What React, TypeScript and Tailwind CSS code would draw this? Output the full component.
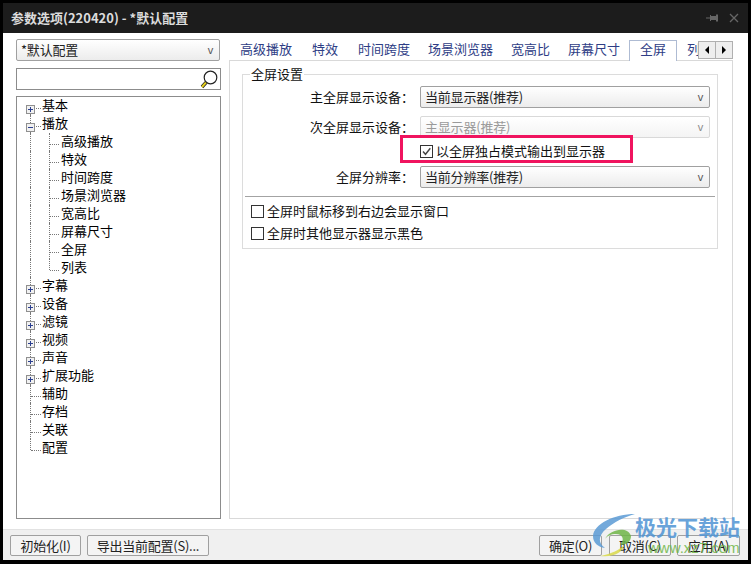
import React from "react";

const cjk = "font-['Microsoft_YaHei','Noto_Sans_CJK_SC','Liberation_Sans',sans-serif]";

const tabs = [
  { label: "高级播放", cls: "ml-[11px] w-[52px]" },
  { label: "特效", cls: "ml-[20px] w-[26px]" },
  { label: "时间跨度", cls: "ml-[20px] w-[52px]" },
  { label: "场景浏览器", cls: "ml-[18px] w-[65px]" },
  { label: "宽高比", cls: "ml-[18px] w-[39px]" },
  { label: "屏幕尺寸", cls: "ml-[18px] w-[52px]" },
];

type Node = { label: string; level: 0 | 1; box?: "+" | "-" };

const nodes: Node[] = [
  { label: "基本", level: 0, box: "+" },
  { label: "播放", level: 0, box: "-" },
  { label: "高级播放", level: 1 },
  { label: "特效", level: 1 },
  { label: "时间跨度", level: 1 },
  { label: "场景浏览器", level: 1 },
  { label: "宽高比", level: 1 },
  { label: "屏幕尺寸", level: 1 },
  { label: "全屏", level: 1 },
  { label: "列表", level: 1 },
  { label: "字幕", level: 0, box: "+" },
  { label: "设备", level: 0, box: "+" },
  { label: "滤镜", level: 0, box: "+" },
  { label: "视频", level: 0, box: "+" },
  { label: "声音", level: 0, box: "+" },
  { label: "扩展功能", level: 0, box: "+" },
  { label: "辅助", level: 0 },
  { label: "存档", level: 0 },
  { label: "关联", level: 0 },
  { label: "配置", level: 0 },
];

const Caret = ({ dim }: { dim?: boolean }) => (
  <span className={`text-[11px] leading-none font-['Liberation_Sans',sans-serif] ${dim ? "text-[#8a8a8a]" : "text-[#555]"}`}>v</span>
);

const Select = ({ label, disabled, width }: { label: string; disabled?: boolean; width?: string }) => (
  <div
    className={`flex items-center justify-between h-[22px] pl-[4px] pr-[6px] rounded-[2px] border text-[13px] tracking-[-0.2px] bg-gradient-to-b from-white to-[#ececec] ${width ?? "w-[290px]"} ${
      disabled ? "border-[#d9d9d9] text-[#9a9a9a] from-[#fafafa] to-[#f4f4f4]" : "border-[#a0a0a0] text-[#222]"
    }`}
  >
    <span>{label}</span>
    <Caret dim={disabled} />
  </div>
);

const FormRow = ({ label, children, className }: { label: string; children: React.ReactNode; className?: string }) => (
  <div className={`flex items-center ${className ?? ""}`}>
    <span className="w-[169px] text-right text-[13px] text-[#111] whitespace-nowrap">{label}</span>
    <span className="w-[6px]" />
    {children}
  </div>
);

const Check = ({ on }: { on?: boolean }) => (
  <span className="w-[13px] h-[13px] border border-[#333] bg-white flex items-center justify-center shrink-0">
    {on && (
      <svg width="11" height="11" viewBox="0 0 11 11" fill="none">
        <path d="M2 5.500 L4.500 8.300 L9.300 2.300" stroke="#444" strokeWidth="1.400" />
      </svg>
    )}
  </span>
);

const Btn = ({ label, className }: { label: string; className: string }) => (
  <button className={`h-[21px] rounded-[2px] border border-[#a0a0a0] bg-[#f4f4f4] text-[13px] tracking-[-0.25px] text-[#222] leading-none whitespace-nowrap ${className}`}>
    {label}
  </button>
);

const TreeRow = ({ node, index }: { node: Node; index: number }) => {
  const inPlay = node.level === 1;
  const lastRoot = index === nodes.length - 1;
  const lastChild = node.label === "列表";
  return (
    <div className="relative h-[18px] text-[13px] text-black leading-[18px]">
      {/* tree guides */}
      {index === 0 ? (
        <span className="absolute left-[13px] top-[14px] h-[4px] border-l border-dotted border-[#777]" />
      ) : (
        <span className={`absolute left-[13px] top-0 border-l border-dotted border-[#777] ${lastRoot ? "h-[11px]" : "h-[18px]"}`} />
      )}
      {inPlay && (
        <>
          <span className={`absolute left-[32px] top-0 border-l border-dotted border-[#777] ${lastChild ? "h-[11px]" : "h-[18px]"}`} />
          <span className="absolute left-[33px] top-[11px] w-[9px] border-t border-dotted border-[#777]" />
        </>
      )}
      {!inPlay && <span className="absolute left-[14px] top-[11px] w-[10px] border-t border-dotted border-[#777]" />}
      {node.box && (
        <span className="absolute left-[9px] top-[8px] w-[9px] h-[9px] border border-[#8f8f8f] bg-[#f1f1f1]">
          <span className="absolute left-[1px] top-[3px] w-[5px] h-[1px] bg-[#2b3f8f]" />
          {node.box === "+" && <span className="absolute left-[3px] top-[1px] w-[1px] h-[5px] bg-[#2b3f8f]" />}
        </span>
      )}
      <span className={`absolute -top-px whitespace-nowrap ${inPlay ? "left-[44px]" : "left-[25px]"}`}>{node.label}</span>
    </div>
  );
};

export default function App() {
  return (
    <div className={`relative w-[751px] h-[564px] overflow-hidden bg-black pt-[3px] pl-[3px] pr-[3px] pb-[4px] flex flex-col ${cjk}`}>
      {/* title bar */}
      <div className="h-[30px] shrink-0 bg-[#1c1c1c] flex items-center justify-between pl-[8px] pr-[9px]">
        <span className="text-[13px] font-semibold text-[#dcdcdc] whitespace-nowrap">参数选项(220420) - *默认配置</span>
        <span className="flex items-center gap-[11px]">
          <svg width="12" height="10" viewBox="0 0 12 10" fill="#666">
            <path d="M0 4.500h4V5.500H0zM4 2h1v6H4zM5 3h6v4H5zM10 1.500h2v7h-2z" />
          </svg>
          <svg width="10" height="10" viewBox="0 0 10 10" stroke="#666" strokeWidth="1.300">
            <path d="M1 1l8 8M9 1l-8 8" />
          </svg>
        </span>
      </div>

      {/* body */}
      <div className="flex-1 flex bg-white pt-[6px] pl-[13px] pr-[15px] pb-[10px] gap-[8px] min-h-0">
        {/* left column */}
        <div className="w-[205px] shrink-0 flex flex-col">
          <Select label="*默认配置" width="w-[204px]" />
          <div className="mt-[7px] h-[22px] border border-[#8c8c8c] bg-white flex items-center justify-end pr-[2px]">
            <svg width="19" height="19" viewBox="0 0 19 19" fill="none">
              <circle cx="11.500" cy="7.500" r="6.300" stroke="#222" strokeWidth="1.200" fill="#fff" />
              <path d="M7 12.500 L3 17" stroke="#222" strokeWidth="3.400" />
              <path d="M6.800 12.700 L3 17" stroke="#e6cf1a" strokeWidth="2" />
            </svg>
          </div>
          <div className="mt-[6px] flex-1 border border-[#8c8c8c] bg-white">
            {nodes.map((n, i) => (
              <TreeRow key={n.label + i} node={n} index={i} />
            ))}
          </div>
        </div>

        {/* right column */}
        <div className="flex-1 flex flex-col min-w-0 pt-[1px]">
          <div className="relative h-[21px] shrink-0 flex items-start text-[13px] leading-[18px] text-[#2e3d85] overflow-hidden whitespace-nowrap">
            {tabs.map((t) => (
              <span key={t.label} className={`shrink-0 ${t.cls}`}>
                {t.label}
              </span>
            ))}
            <span className="shrink-0 ml-[9px] w-[48px] h-[21px] border border-b-0 border-[#aebbd3] bg-white text-center leading-[16px]">全屏</span>
            <span className="shrink-0 ml-[10px]">列表</span>
            <span className="absolute right-0 top-[1px] w-[35px] h-[18px] flex border border-[#b0b0b0] bg-[#eeeeee]">
              <span className="flex-1 flex items-center justify-center border-r border-[#b0b0b0]">
                <span className="w-0 h-0 border-y-[4px] border-y-transparent border-r-[4px] border-r-black" />
              </span>
              <span className="flex-1 flex items-center justify-center">
                <span className="w-0 h-0 border-y-[4px] border-y-transparent border-l-[4px] border-l-black" />
              </span>
            </span>
          </div>

          <div className="flex-1 border border-[#d9d9d9] pt-[13px] pl-[12px] pr-[14px] -mt-px">
            <fieldset className="relative border border-[#dcdcdc] h-[175px] px-[2px] pt-[11px]">
              <legend className="absolute left-[7px] -top-[10px] bg-white px-px text-[13px] text-[#111] leading-[18px]">全屏设置</legend>
              <FormRow label="主全屏显示设备：">
                <Select label="当前显示器(推荐)" />
              </FormRow>
              <FormRow label="次全屏显示设备：" className="mt-[8px]">
                <Select label="主显示器(推荐)" disabled />
              </FormRow>
              <div className="flex items-center h-[26px] mb-[2px] pl-[175px] text-[13px] text-[#111]">
                <Check on />
                <span className="ml-[3px] whitespace-nowrap">以全屏独占模式输出到显示器</span>
              </div>
              <FormRow label="全屏分辨率：">
                <Select label="当前分辨率(推荐)" />
              </FormRow>
              <div className="mt-[8px] h-px bg-[#a3a3a3]" />
              <div className="mt-[8px] flex items-center h-[13px] pl-[6px] text-[13px] text-[#111]">
                <Check />
                <span className="ml-[3px] pb-[2px] whitespace-nowrap">全屏时鼠标移到右边会显示窗口</span>
              </div>
              <div className="mt-[9px] flex items-center h-[13px] pl-[6px] text-[13px] text-[#111]">
                <Check />
                <span className="ml-[3px] pb-[2px] whitespace-nowrap">全屏时其他显示器显示黑色</span>
              </div>
            </fieldset>
          </div>
        </div>
      </div>

      {/* footer */}
      <div className="h-[31px] shrink-0 bg-[#f0f0f0] border-t border-[#e2e2e2] flex items-center pt-px pl-[7px] pr-[8px]">
        <Btn label="初始化(I)" className="w-[71px]" />
        <Btn label="导出当前配置(S)..." className="w-[122px] ml-[6px]" />
        <span className="flex-1" />
        <Btn label="确定(O)" className="w-[63px]" />
        <Btn label="取消(C)" className="w-[62px] ml-[7px]" />
        <Btn label="应用(A)" className="w-[63px] ml-[6px]" />
      </div>

      {/* annotation */}
      <div className="absolute left-[400px] top-[135px] w-[233px] h-[28px] border-[3px] border-[#f0145f]" />

      {/* watermark */}
      <div className="absolute left-[590px] top-[512px] w-[155px] h-[48px] opacity-85 pointer-events-none">
        <svg className="absolute left-0 top-0" width="50" height="48" viewBox="0 0 50 48" fill="none">
          <path d="M45 2 C24 2 4 12 3 24 C3 31 8 35 15 36 C8 31 8 24 16 17 C24 10 34 5 45 2Z" fill="#5b9bd5" />
          <path d="M15 27 C20 17 38 14 41 24 C41 30 36 33 30 33 C35 28 33 22 26 22 C21 22 17 24 15 27Z" fill="#6fb648" />
          <path d="M10 44 C20 42 30 38 34 33 C34 39 24 46 10 44Z" fill="#d9d94a" />
        </svg>
        <span className="absolute left-[45px] top-0 text-[21px] leading-[28px] font-bold text-[#4f94d4] whitespace-nowrap">极光下载站</span>
        <span className="absolute left-[58px] top-[27px] text-[15px] leading-[18px] text-[#6fb648] whitespace-nowrap font-['Liberation_Sans',sans-serif]">www.xz7.com</span>
      </div>
    </div>
  );
}
